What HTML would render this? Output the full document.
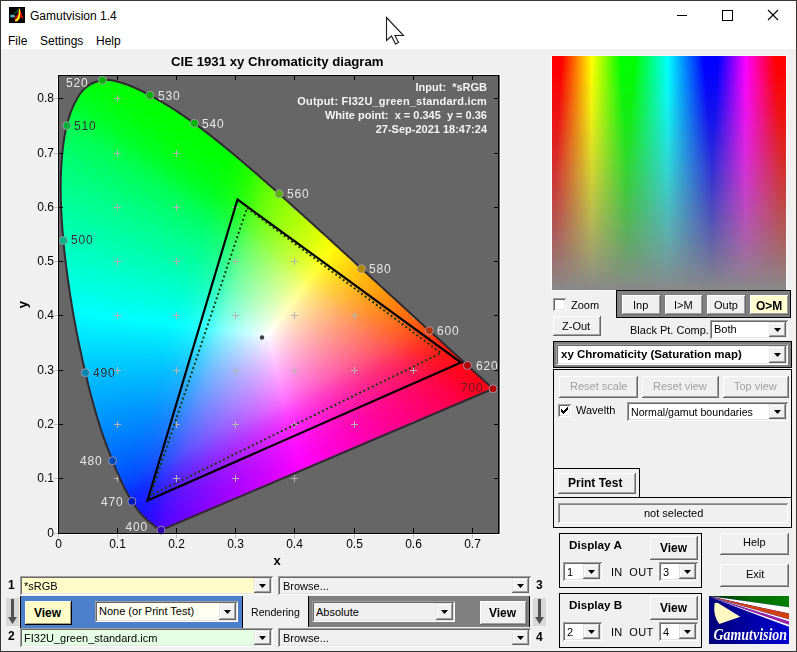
<!DOCTYPE html>
<html><head><meta charset="utf-8">
<style>
*{margin:0;padding:0;box-sizing:border-box}
html,body{width:797px;height:652px;overflow:hidden}
body{position:relative;background:#f0f0f0;font-family:"Liberation Sans",sans-serif;font-size:11px;color:#000}
.a{position:absolute}
.t{position:absolute;white-space:pre;line-height:1}
.b{font-weight:bold}
.btn{position:absolute;background:#f0f0f0;box-shadow:inset -1px -1px #696969,inset 1px 1px #fff,inset -2px -2px #a0a0a0}
.sunk{position:absolute;box-shadow:inset 1px 1px #a0a0a0,inset -1px -1px #fff,inset 2px 2px #696969,inset -2px -2px #e3e3e3}
.arr{position:absolute;background:#f0f0f0;box-shadow:inset -1px -1px #696969,inset 1px 1px #e3e3e3,inset -2px -2px #a0a0a0,inset 2px 2px #fff}
.tri{position:absolute;left:50%;top:50%;margin-left:-4px;margin-top:-2px;width:7px;height:4px}
.box{position:absolute;border:1px solid #000}
.chk{position:absolute;width:13px;height:13px;background:#fff;box-shadow:inset 1px 1px #a0a0a0,inset -1px -1px #fff,inset 2px 2px #696969,inset -2px -2px #e3e3e3}
</style></head><body>

<!-- title + menu bar -->
<div class="a" style="left:0;top:0;width:797px;height:49px;background:#fff"></div>
<svg class="a" style="left:9px;top:7px" width="16" height="16" viewBox="0 0 16 16">
<rect width="16" height="16" fill="#000"/>
<path d="M10 1.5 L11.5 3 L13 8 L14.5 12 L12.5 10.5 L11 11 L9 14 L6.5 15 L6 13.5 L5 12 L6 9.5 L9 7 Z" fill="#b00000"/>
<path d="M11 2.5 L12.5 7 L14.5 12 L12 10 Z" fill="#ff0000"/>
<path d="M10 1.5 L11 2 L11.3 7 L10.5 11.5 L8.5 14 L6.5 14.5 L6 13 L8 11.5 L9.5 8 Z" fill="#ffff00"/>
<path d="M5.5 6 L7.5 5.2 L8.5 3.5 L9.2 1.8" stroke="#00b8c0" stroke-width="1" fill="none" stroke-dasharray="1.2 0.6"/>
<ellipse cx="3.5" cy="9" rx="2.6" ry="1.6" fill="#20c8d8"/>
<ellipse cx="3.8" cy="9" rx="1.4" ry="1" fill="#909090"/>
</svg>
<div class="t" style="left:30px;top:10px;font-size:12px">Gamutvision 1.4</div>
<svg class="a" style="left:670px;top:5px" width="120" height="22">
<path d="M7 10.5 H17" stroke="#000" stroke-width="1"/>
<rect x="52.5" y="5.5" width="10" height="10" fill="none" stroke="#000" stroke-width="1"/>
<path d="M98 5 L108 15 M108 5 L98 15" stroke="#000" stroke-width="1.1"/>
</svg>
<div class="t" style="left:8px;top:35px;font-size:12px">File</div>
<div class="t" style="left:40px;top:35px;font-size:12px">Settings</div>
<div class="t" style="left:96px;top:35px;font-size:12px">Help</div>

<!-- plot -->
<div class="a" style="left:57px;top:74px;width:444px;height:461px;background:#fff"></div>
<div class="a" style="left:58px;top:75px;width:442px;height:459px;background:#666"></div><div class="a" style="left:58px;top:75px;width:442px;height:459px;clip-path:polygon(103.0px 455.2px, 101.9px 455.0px, 97.7px 451.9px, 85.7px 441.7px, 73.9px 426.4px, 65.3px 410.7px, 54.5px 385.8px, 41.1px 348.8px, 27.3px 297.7px, 14.4px 233.8px, 5.3px 165.5px, 2.8px 102.3px, 8.7px 50.5px, 23.5px 17.0px, 44.4px 5.2px, 68.0px 9.3px, 92.0px 20.3px, 136.3px 48.3px, 178.9px 82.0px, 221.2px 118.8px, 263.1px 156.7px, 303.6px 193.6px, 340.7px 227.5px, 371.3px 255.6px, 394.3px 276.5px, 409.5px 290.4px, 425.7px 305.3px, 435.0px 313.8px);background:radial-gradient(circle at 210px 260px,#fff 0,rgba(255,255,255,0.6) 40px,rgba(255,255,255,0) 110px),conic-gradient(from 0deg at 210px 260px,rgb(122,255,0) 0deg,rgb(159,255,0) 10deg,rgb(195,255,0) 20deg,rgb(231,255,0) 30deg,rgb(255,241,0) 40deg,rgb(255,207,0) 50deg,rgb(255,178,0) 60deg,rgb(255,151,0) 70deg,rgb(255,126,0) 80deg,rgb(255,101,62) 90deg,rgb(255,73,94) 100deg,rgb(255,37,119) 110deg,rgb(255,0,143) 120deg,rgb(255,0,165) 130deg,rgb(255,0,188) 140deg,rgb(255,0,212) 150deg,rgb(255,0,238) 160deg,rgb(242,0,255) 170deg,rgb(213,0,255) 180deg,rgb(186,0,255) 190deg,rgb(157,57,255) 200deg,rgb(127,89,255) 210deg,rgb(91,115,255) 220deg,rgb(31,139,255) 230deg,rgb(0,162,255) 240deg,rgb(0,185,255) 250deg,rgb(0,210,255) 260deg,rgb(0,236,255) 270deg,rgb(0,255,244) 280deg,rgb(0,255,216) 290deg,rgb(0,255,190) 300deg,rgb(0,255,164) 310deg,rgb(0,255,138) 320deg,rgb(0,255,109) 330deg,rgb(0,255,76) 340deg,rgb(77,255,16) 350deg,rgb(122,255,0) 360deg)"></div>
<canvas id="cv" class="a" style="left:58px;top:75px" width="442" height="459"></canvas>
<svg class="a" style="left:0;top:0" width="797" height="652">
<defs><clipPath id="lc"><path d="M160.99 530.19 L160.98 530.19 L160.96 530.19 L160.94 530.19 L160.92 530.19 L160.89 530.19 L160.86 530.19 L160.84 530.19 L160.81 530.19 L160.79 530.19 L160.76 530.19 L160.73 530.19 L160.70 530.19 L160.67 530.19 L160.64 530.19 L160.61 530.19 L160.58 530.19 L160.54 530.20 L160.51 530.20 L160.47 530.20 L160.44 530.20 L160.40 530.21 L160.36 530.21 L160.32 530.20 L160.28 530.19 L160.24 530.18 L160.19 530.17 L160.14 530.15 L160.10 530.14 L160.04 530.12 L159.99 530.09 L159.93 530.06 L159.87 530.03 L159.80 530.00 L159.72 529.96 L159.65 529.91 L159.57 529.87 L159.48 529.82 L159.40 529.77 L159.31 529.71 L159.22 529.65 L159.12 529.59 L159.03 529.53 L158.93 529.46 L158.83 529.39 L158.73 529.31 L158.62 529.23 L158.51 529.15 L158.39 529.05 L158.26 528.96 L158.12 528.85 L157.98 528.75 L157.84 528.63 L157.69 528.52 L157.53 528.39 L157.37 528.26 L157.20 528.13 L157.04 527.99 L156.87 527.85 L156.69 527.70 L156.51 527.55 L156.33 527.39 L156.14 527.23 L155.94 527.06 L155.73 526.88 L155.51 526.71 L155.29 526.52 L155.06 526.34 L154.82 526.15 L154.58 525.95 L154.32 525.75 L154.06 525.53 L153.77 525.31 L153.48 525.07 L153.17 524.83 L152.86 524.58 L152.53 524.32 L152.19 524.05 L151.84 523.78 L151.48 523.49 L151.11 523.19 L150.74 522.89 L150.35 522.58 L149.96 522.26 L149.55 521.94 L149.13 521.60 L148.70 521.25 L148.26 520.87 L147.80 520.48 L147.33 520.07 L146.85 519.64 L146.35 519.21 L145.84 518.75 L145.32 518.28 L144.78 517.77 L144.23 517.24 L143.66 516.68 L143.09 516.10 L142.51 515.51 L141.92 514.91 L141.31 514.28 L140.68 513.60 L140.03 512.86 L139.35 512.04 L138.63 511.14 L137.89 510.17 L137.11 509.15 L136.31 508.07 L135.49 506.92 L134.63 505.69 L133.75 504.37 L132.83 502.95 L131.89 501.42 L130.92 499.81 L129.93 498.13 L128.91 496.36 L127.86 494.50 L126.78 492.52 L125.66 490.40 L124.51 488.13 L123.32 485.68 L122.09 483.09 L120.83 480.38 L119.54 477.53 L118.21 474.54 L116.84 471.39 L115.43 468.05 L113.98 464.51 L112.49 460.76 L110.95 456.82 L109.34 452.71 L107.69 448.43 L106.00 443.95 L104.28 439.26 L102.56 434.36 L100.84 429.23 L99.13 423.85 L97.42 418.22 L95.69 412.35 L93.96 406.26 L92.21 399.94 L90.47 393.41 L88.75 386.68 L87.04 379.76 L85.35 372.66 L83.66 365.31 L81.96 357.68 L80.26 349.82 L78.58 341.77 L76.93 333.60 L75.34 325.34 L73.82 317.04 L72.40 308.76 L71.04 300.41 L69.71 291.89 L68.43 283.27 L67.22 274.60 L66.09 265.93 L65.06 257.33 L64.14 248.84 L63.35 240.52 L62.66 232.31 L62.06 224.10 L61.55 215.96 L61.14 207.90 L60.85 199.97 L60.70 192.21 L60.68 184.65 L60.81 177.34 L61.08 170.19 L61.48 163.16 L62.01 156.28 L62.68 149.59 L63.48 143.13 L64.42 136.94 L65.50 131.07 L66.72 125.55 L68.10 120.33 L69.65 115.37 L71.34 110.68 L73.17 106.27 L75.12 102.19 L77.17 98.43 L79.30 95.03 L81.51 92.00 L83.81 89.37 L86.24 87.14 L88.79 85.27 L91.42 83.73 L94.12 82.48 L96.88 81.49 L99.65 80.73 L102.44 80.16 L105.26 79.87 L108.14 79.91 L111.08 80.24 L114.05 80.80 L117.05 81.54 L120.05 82.40 L123.05 83.33 L126.04 84.29 L129.02 85.32 L132.03 86.51 L135.05 87.82 L138.08 89.23 L141.09 90.71 L144.09 92.24 L147.06 93.78 L149.99 95.31 L152.88 96.84 L155.75 98.42 L158.60 100.03 L161.43 101.67 L164.23 103.34 L167.03 105.04 L169.81 106.76 L172.58 108.50 L175.34 110.27 L178.08 112.06 L180.80 113.87 L183.51 115.72 L186.21 117.58 L188.90 119.47 L191.59 121.39 L194.29 123.32 L196.98 125.28 L199.66 127.26 L202.35 129.27 L205.02 131.30 L207.70 133.36 L210.37 135.42 L213.03 137.51 L215.69 139.61 L218.35 141.72 L221.01 143.86 L223.65 146.01 L226.30 148.18 L228.94 150.36 L231.58 152.56 L234.22 154.76 L236.87 156.98 L239.51 159.20 L242.15 161.44 L244.79 163.70 L247.42 165.96 L250.06 168.24 L252.70 170.52 L255.34 172.81 L257.98 175.11 L260.62 177.42 L263.27 179.73 L265.92 182.06 L268.57 184.40 L271.22 186.74 L273.87 189.08 L276.51 191.43 L279.15 193.78 L281.79 196.14 L284.43 198.50 L287.06 200.87 L289.69 203.24 L292.32 205.61 L294.95 207.99 L297.58 210.36 L300.21 212.73 L302.83 215.10 L305.46 217.47 L308.08 219.84 L310.71 222.22 L313.33 224.59 L315.94 226.95 L318.54 229.32 L321.14 231.68 L323.73 234.03 L326.31 236.38 L328.89 238.74 L331.46 241.08 L334.03 243.43 L336.58 245.76 L339.13 248.09 L341.66 250.40 L344.19 252.71 L346.71 255.02 L349.22 257.31 L351.72 259.60 L354.21 261.88 L356.68 264.15 L359.14 266.40 L361.59 268.64 L364.03 270.87 L366.45 273.09 L368.87 275.30 L371.27 277.50 L373.65 279.68 L376.02 281.85 L378.37 284.00 L380.69 286.12 L383.01 288.23 L385.31 290.33 L387.59 292.41 L389.85 294.47 L392.10 296.52 L394.32 298.54 L396.51 300.54 L398.67 302.52 L400.81 304.48 L402.93 306.42 L405.03 308.35 L407.10 310.25 L409.14 312.12 L411.15 313.97 L413.12 315.78 L415.06 317.56 L416.95 319.29 L418.81 320.99 L420.63 322.66 L422.42 324.29 L424.18 325.90 L425.92 327.49 L427.62 329.05 L429.31 330.58 L430.97 332.11 L432.61 333.61 L434.23 335.08 L435.82 336.54 L437.38 337.96 L438.90 339.35 L440.39 340.71 L441.85 342.04 L443.26 343.33 L444.64 344.58 L445.99 345.80 L447.30 346.99 L448.59 348.15 L449.84 349.29 L451.06 350.40 L452.25 351.48 L453.42 352.55 L454.55 353.58 L455.64 354.59 L456.71 355.57 L457.75 356.53 L458.76 357.46 L459.75 358.36 L460.71 359.25 L461.65 360.11 L462.55 360.94 L463.42 361.74 L464.27 362.52 L465.10 363.28 L465.90 364.02 L466.69 364.74 L467.45 365.44 L468.20 366.12 L468.92 366.77 L469.62 367.40 L470.30 368.02 L470.95 368.61 L471.60 369.20 L472.22 369.76 L472.83 370.32 L473.43 370.87 L474.01 371.39 L474.56 371.90 L475.10 372.40 L475.63 372.89 L476.15 373.36 L476.65 373.83 L477.15 374.28 L477.64 374.73 L478.12 375.17 L478.59 375.60 L479.04 376.02 L479.49 376.43 L479.92 376.83 L480.34 377.22 L480.76 377.60 L481.16 377.97 L481.56 378.33 L481.94 378.68 L482.32 379.03 L482.68 379.36 L483.03 379.69 L483.38 380.00 L483.72 380.31 L484.04 380.61 L484.36 380.89 L484.67 381.17 L484.97 381.44 L485.26 381.70 L485.55 381.95 L485.82 382.19 L486.08 382.43 L486.33 382.65 L486.55 382.86 L486.76 383.05 L486.97 383.24 L487.17 383.43 L487.39 383.62 L487.61 383.83 L487.86 384.06 L488.13 384.31 L488.43 384.59 L488.75 384.88 L489.08 385.18 L489.40 385.47 L489.70 385.75 L489.98 386.00 L490.22 386.23 L490.43 386.42 L490.61 386.58 L490.77 386.73 L490.91 386.86 L491.04 386.98 L491.16 387.09 L491.28 387.20 L491.40 387.31 L491.53 387.42 L491.64 387.53 L491.74 387.62 L491.84 387.72 L491.94 387.81 L492.04 387.89 L492.13 387.98 L492.23 388.07 L492.34 388.17 L492.45 388.27 L492.56 388.37 L492.67 388.47 L492.77 388.57 L492.86 388.65 L492.94 388.73 L493.00 388.78 Z"/></clipPath></defs>
<path d="M114 478.5h7M117.5 475v7M114 424.5h7M117.5 421v7M114 370.5h7M117.5 367v7M114 315.5h7M117.5 312v7M114 261.5h7M117.5 258v7M114 207.5h7M117.5 204v7M114 153.5h7M117.5 150v7M114 98.5h7M117.5 95v7M173 478.5h7M176.5 475v7M173 424.5h7M176.5 421v7M173 370.5h7M176.5 367v7M173 315.5h7M176.5 312v7M173 261.5h7M176.5 258v7M173 207.5h7M176.5 204v7M173 153.5h7M176.5 150v7M173 98.5h7M176.5 95v7M232 478.5h7M235.5 475v7M232 424.5h7M235.5 421v7M232 370.5h7M235.5 367v7M232 315.5h7M235.5 312v7M232 261.5h7M235.5 258v7M232 207.5h7M235.5 204v7M232 153.5h7M235.5 150v7M232 98.5h7M235.5 95v7M291 478.5h7M294.5 475v7M291 424.5h7M294.5 421v7M291 370.5h7M294.5 367v7M291 315.5h7M294.5 312v7M291 261.5h7M294.5 258v7M291 207.5h7M294.5 204v7M291 153.5h7M294.5 150v7M291 98.5h7M294.5 95v7M351 478.5h7M354.5 475v7M351 424.5h7M354.5 421v7M351 370.5h7M354.5 367v7M351 315.5h7M354.5 312v7M351 261.5h7M354.5 258v7M351 207.5h7M354.5 204v7M351 153.5h7M354.5 150v7M351 98.5h7M354.5 95v7M410 478.5h7M413.5 475v7M410 424.5h7M413.5 421v7M410 370.5h7M413.5 367v7M410 315.5h7M413.5 312v7M410 261.5h7M413.5 258v7M410 207.5h7M413.5 204v7M410 153.5h7M413.5 150v7M410 98.5h7M413.5 95v7M469 478.5h7M472.5 475v7M469 424.5h7M472.5 421v7M469 315.5h7M472.5 312v7M469 261.5h7M472.5 258v7M469 207.5h7M472.5 204v7M469 153.5h7M472.5 150v7M469 98.5h7M472.5 95v7" stroke="#b4b4b4" stroke-width="1" fill="none" clip-path="url(#lc)" shape-rendering="crispEdges"/>
<path d="M114 478.5h7M117.5 475v7M291 478.5h7M294.5 475v7" stroke="#b4b4b4" stroke-width="1" fill="none" shape-rendering="crispEdges"/>
<path d="M160.99 530.19 L160.98 530.19 L160.96 530.19 L160.94 530.19 L160.92 530.19 L160.89 530.19 L160.86 530.19 L160.84 530.19 L160.81 530.19 L160.79 530.19 L160.76 530.19 L160.73 530.19 L160.70 530.19 L160.67 530.19 L160.64 530.19 L160.61 530.19 L160.58 530.19 L160.54 530.20 L160.51 530.20 L160.47 530.20 L160.44 530.20 L160.40 530.21 L160.36 530.21 L160.32 530.20 L160.28 530.19 L160.24 530.18 L160.19 530.17 L160.14 530.15 L160.10 530.14 L160.04 530.12 L159.99 530.09 L159.93 530.06 L159.87 530.03 L159.80 530.00 L159.72 529.96 L159.65 529.91 L159.57 529.87 L159.48 529.82 L159.40 529.77 L159.31 529.71 L159.22 529.65 L159.12 529.59 L159.03 529.53 L158.93 529.46 L158.83 529.39 L158.73 529.31 L158.62 529.23 L158.51 529.15 L158.39 529.05 L158.26 528.96 L158.12 528.85 L157.98 528.75 L157.84 528.63 L157.69 528.52 L157.53 528.39 L157.37 528.26 L157.20 528.13 L157.04 527.99 L156.87 527.85 L156.69 527.70 L156.51 527.55 L156.33 527.39 L156.14 527.23 L155.94 527.06 L155.73 526.88 L155.51 526.71 L155.29 526.52 L155.06 526.34 L154.82 526.15 L154.58 525.95 L154.32 525.75 L154.06 525.53 L153.77 525.31 L153.48 525.07 L153.17 524.83 L152.86 524.58 L152.53 524.32 L152.19 524.05 L151.84 523.78 L151.48 523.49 L151.11 523.19 L150.74 522.89 L150.35 522.58 L149.96 522.26 L149.55 521.94 L149.13 521.60 L148.70 521.25 L148.26 520.87 L147.80 520.48 L147.33 520.07 L146.85 519.64 L146.35 519.21 L145.84 518.75 L145.32 518.28 L144.78 517.77 L144.23 517.24 L143.66 516.68 L143.09 516.10 L142.51 515.51 L141.92 514.91 L141.31 514.28 L140.68 513.60 L140.03 512.86 L139.35 512.04 L138.63 511.14 L137.89 510.17 L137.11 509.15 L136.31 508.07 L135.49 506.92 L134.63 505.69 L133.75 504.37 L132.83 502.95 L131.89 501.42 L130.92 499.81 L129.93 498.13 L128.91 496.36 L127.86 494.50 L126.78 492.52 L125.66 490.40 L124.51 488.13 L123.32 485.68 L122.09 483.09 L120.83 480.38 L119.54 477.53 L118.21 474.54 L116.84 471.39 L115.43 468.05 L113.98 464.51 L112.49 460.76 L110.95 456.82 L109.34 452.71 L107.69 448.43 L106.00 443.95 L104.28 439.26 L102.56 434.36 L100.84 429.23 L99.13 423.85 L97.42 418.22 L95.69 412.35 L93.96 406.26 L92.21 399.94 L90.47 393.41 L88.75 386.68 L87.04 379.76 L85.35 372.66 L83.66 365.31 L81.96 357.68 L80.26 349.82 L78.58 341.77 L76.93 333.60 L75.34 325.34 L73.82 317.04 L72.40 308.76 L71.04 300.41 L69.71 291.89 L68.43 283.27 L67.22 274.60 L66.09 265.93 L65.06 257.33 L64.14 248.84 L63.35 240.52 L62.66 232.31 L62.06 224.10 L61.55 215.96 L61.14 207.90 L60.85 199.97 L60.70 192.21 L60.68 184.65 L60.81 177.34 L61.08 170.19 L61.48 163.16 L62.01 156.28 L62.68 149.59 L63.48 143.13 L64.42 136.94 L65.50 131.07 L66.72 125.55 L68.10 120.33 L69.65 115.37 L71.34 110.68 L73.17 106.27 L75.12 102.19 L77.17 98.43 L79.30 95.03 L81.51 92.00 L83.81 89.37 L86.24 87.14 L88.79 85.27 L91.42 83.73 L94.12 82.48 L96.88 81.49 L99.65 80.73 L102.44 80.16 L105.26 79.87 L108.14 79.91 L111.08 80.24 L114.05 80.80 L117.05 81.54 L120.05 82.40 L123.05 83.33 L126.04 84.29 L129.02 85.32 L132.03 86.51 L135.05 87.82 L138.08 89.23 L141.09 90.71 L144.09 92.24 L147.06 93.78 L149.99 95.31 L152.88 96.84 L155.75 98.42 L158.60 100.03 L161.43 101.67 L164.23 103.34 L167.03 105.04 L169.81 106.76 L172.58 108.50 L175.34 110.27 L178.08 112.06 L180.80 113.87 L183.51 115.72 L186.21 117.58 L188.90 119.47 L191.59 121.39 L194.29 123.32 L196.98 125.28 L199.66 127.26 L202.35 129.27 L205.02 131.30 L207.70 133.36 L210.37 135.42 L213.03 137.51 L215.69 139.61 L218.35 141.72 L221.01 143.86 L223.65 146.01 L226.30 148.18 L228.94 150.36 L231.58 152.56 L234.22 154.76 L236.87 156.98 L239.51 159.20 L242.15 161.44 L244.79 163.70 L247.42 165.96 L250.06 168.24 L252.70 170.52 L255.34 172.81 L257.98 175.11 L260.62 177.42 L263.27 179.73 L265.92 182.06 L268.57 184.40 L271.22 186.74 L273.87 189.08 L276.51 191.43 L279.15 193.78 L281.79 196.14 L284.43 198.50 L287.06 200.87 L289.69 203.24 L292.32 205.61 L294.95 207.99 L297.58 210.36 L300.21 212.73 L302.83 215.10 L305.46 217.47 L308.08 219.84 L310.71 222.22 L313.33 224.59 L315.94 226.95 L318.54 229.32 L321.14 231.68 L323.73 234.03 L326.31 236.38 L328.89 238.74 L331.46 241.08 L334.03 243.43 L336.58 245.76 L339.13 248.09 L341.66 250.40 L344.19 252.71 L346.71 255.02 L349.22 257.31 L351.72 259.60 L354.21 261.88 L356.68 264.15 L359.14 266.40 L361.59 268.64 L364.03 270.87 L366.45 273.09 L368.87 275.30 L371.27 277.50 L373.65 279.68 L376.02 281.85 L378.37 284.00 L380.69 286.12 L383.01 288.23 L385.31 290.33 L387.59 292.41 L389.85 294.47 L392.10 296.52 L394.32 298.54 L396.51 300.54 L398.67 302.52 L400.81 304.48 L402.93 306.42 L405.03 308.35 L407.10 310.25 L409.14 312.12 L411.15 313.97 L413.12 315.78 L415.06 317.56 L416.95 319.29 L418.81 320.99 L420.63 322.66 L422.42 324.29 L424.18 325.90 L425.92 327.49 L427.62 329.05 L429.31 330.58 L430.97 332.11 L432.61 333.61 L434.23 335.08 L435.82 336.54 L437.38 337.96 L438.90 339.35 L440.39 340.71 L441.85 342.04 L443.26 343.33 L444.64 344.58 L445.99 345.80 L447.30 346.99 L448.59 348.15 L449.84 349.29 L451.06 350.40 L452.25 351.48 L453.42 352.55 L454.55 353.58 L455.64 354.59 L456.71 355.57 L457.75 356.53 L458.76 357.46 L459.75 358.36 L460.71 359.25 L461.65 360.11 L462.55 360.94 L463.42 361.74 L464.27 362.52 L465.10 363.28 L465.90 364.02 L466.69 364.74 L467.45 365.44 L468.20 366.12 L468.92 366.77 L469.62 367.40 L470.30 368.02 L470.95 368.61 L471.60 369.20 L472.22 369.76 L472.83 370.32 L473.43 370.87 L474.01 371.39 L474.56 371.90 L475.10 372.40 L475.63 372.89 L476.15 373.36 L476.65 373.83 L477.15 374.28 L477.64 374.73 L478.12 375.17 L478.59 375.60 L479.04 376.02 L479.49 376.43 L479.92 376.83 L480.34 377.22 L480.76 377.60 L481.16 377.97 L481.56 378.33 L481.94 378.68 L482.32 379.03 L482.68 379.36 L483.03 379.69 L483.38 380.00 L483.72 380.31 L484.04 380.61 L484.36 380.89 L484.67 381.17 L484.97 381.44 L485.26 381.70 L485.55 381.95 L485.82 382.19 L486.08 382.43 L486.33 382.65 L486.55 382.86 L486.76 383.05 L486.97 383.24 L487.17 383.43 L487.39 383.62 L487.61 383.83 L487.86 384.06 L488.13 384.31 L488.43 384.59 L488.75 384.88 L489.08 385.18 L489.40 385.47 L489.70 385.75 L489.98 386.00 L490.22 386.23 L490.43 386.42 L490.61 386.58 L490.77 386.73 L490.91 386.86 L491.04 386.98 L491.16 387.09 L491.28 387.20 L491.40 387.31 L491.53 387.42 L491.64 387.53 L491.74 387.62 L491.84 387.72 L491.94 387.81 L492.04 387.89 L492.13 387.98 L492.23 388.07 L492.34 388.17 L492.45 388.27 L492.56 388.37 L492.67 388.47 L492.77 388.57 L492.86 388.65 L492.94 388.73 L493.00 388.78 Z" stroke="#302a30" stroke-width="2" fill="none" stroke-linejoin="round"/>
<path d="M237.5 199.5L461 362.5L147.5 500.5Z" stroke="#000" stroke-width="2.2" fill="none" stroke-linejoin="miter"/>
<path d="M247 208L441 353L150.5 495.5Z" stroke="#1e3a12" stroke-width="2" fill="none" stroke-dasharray="2 2.6"/>
<circle cx="262" cy="337.5" r="2.2" fill="#404040"/>
<circle cx="160.99" cy="530.19" r="4" fill="rgb(53,0,178)" stroke="rgba(170,155,180,0.85)" stroke-width="1"/><circle cx="131.89" cy="501.42" r="4" fill="rgb(0,24,178)" stroke="rgba(170,155,180,0.85)" stroke-width="1"/><circle cx="112.49" cy="460.76" r="4" fill="rgb(0,73,178)" stroke="rgba(170,155,180,0.85)" stroke-width="1"/><circle cx="85.35" cy="372.66" r="4" fill="rgb(0,135,178)" stroke="rgba(170,155,180,0.85)" stroke-width="1"/><circle cx="63.35" cy="240.52" r="4" fill="rgb(0,178,130)" stroke="rgba(170,155,180,0.85)" stroke-width="1"/><circle cx="66.72" cy="125.55" r="4" fill="rgb(0,178,57)" stroke="rgba(170,155,180,0.85)" stroke-width="1"/><circle cx="102.44" cy="80.16" r="4" fill="rgb(0,178,0)" stroke="rgba(170,155,180,0.85)" stroke-width="1"/><circle cx="149.99" cy="95.31" r="4" fill="rgb(0,178,0)" stroke="rgba(170,155,180,0.85)" stroke-width="1"/><circle cx="194.29" cy="123.32" r="4" fill="rgb(0,178,0)" stroke="rgba(170,155,180,0.85)" stroke-width="1"/><circle cx="279.15" cy="193.78" r="4" fill="rgb(87,178,0)" stroke="rgba(170,155,180,0.85)" stroke-width="1"/><circle cx="361.59" cy="268.64" r="4" fill="rgb(178,136,0)" stroke="rgba(170,155,180,0.85)" stroke-width="1"/><circle cx="429.31" cy="330.58" r="4" fill="rgb(178,50,0)" stroke="rgba(170,155,180,0.85)" stroke-width="1"/><circle cx="467.45" cy="365.44" r="4" fill="rgb(178,0,0)" stroke="rgba(170,155,180,0.85)" stroke-width="1"/><circle cx="493.00" cy="388.78" r="4" fill="rgb(178,0,0)" stroke="rgba(170,155,180,0.85)" stroke-width="1"/>
<g shape-rendering="crispEdges">
<rect x="58.5" y="75.5" width="440" height="458" fill="none" stroke="#000" stroke-width="1"/>
<rect x="497.5" y="75.5" width="1" height="458" fill="#000"/>
<path d="M58.5 533V528M58.5 76V80M117.5 533V528M117.5 76V80M176.5 533V528M176.5 76V80M235.5 533V528M235.5 76V80M294.5 533V528M294.5 76V80M354.5 533V528M354.5 76V80M413.5 533V528M413.5 76V80M472.5 533V528M472.5 76V80M59 533.5H63M498 533.5H494M59 478.5H63M498 478.5H494M59 424.5H63M498 424.5H494M59 370.5H63M498 370.5H494M59 315.5H63M498 315.5H494M59 261.5H63M498 261.5H494M59 207.5H63M498 207.5H494M59 153.5H63M498 153.5H494M59 98.5H63M498 98.5H494" stroke="#000" stroke-width="1" fill="none"/>
<path d="M58.5 534V538M117.5 534V538M176.5 534V538M235.5 534V538M294.5 534V538M354.5 534V538M413.5 534V538M472.5 534V538M54 533.5H58M54 478.5H58M54 424.5H58M54 370.5H58M54 315.5H58M54 261.5H58M54 207.5H58M54 153.5H58M54 98.5H58" stroke="#c8c0b8" stroke-width="1" fill="none"/>
</g></svg>
<div class="t b" style="left:171px;top:55px;font-size:13.2px">CIE 1931 xy Chromaticity diagram</div>
<div class="t" style="left:28.5px;width:60px;text-align:center;top:538px;font-size:12px">0</div>
<div class="t" style="left:87.5px;width:60px;text-align:center;top:538px;font-size:12px">0.1</div>
<div class="t" style="left:146.5px;width:60px;text-align:center;top:538px;font-size:12px">0.2</div>
<div class="t" style="left:205.5px;width:60px;text-align:center;top:538px;font-size:12px">0.3</div>
<div class="t" style="left:264.5px;width:60px;text-align:center;top:538px;font-size:12px">0.4</div>
<div class="t" style="left:324.5px;width:60px;text-align:center;top:538px;font-size:12px">0.5</div>
<div class="t" style="left:383.5px;width:60px;text-align:center;top:538px;font-size:12px">0.6</div>
<div class="t" style="left:442.5px;width:60px;text-align:center;top:538px;font-size:12px">0.7</div>
<div class="t" style="left:0;width:54px;text-align:right;top:527.0px;font-size:12px">0</div>
<div class="t" style="left:0;width:54px;text-align:right;top:472.0px;font-size:12px">0.1</div>
<div class="t" style="left:0;width:54px;text-align:right;top:418.0px;font-size:12px">0.2</div>
<div class="t" style="left:0;width:54px;text-align:right;top:364.0px;font-size:12px">0.3</div>
<div class="t" style="left:0;width:54px;text-align:right;top:309.0px;font-size:12px">0.4</div>
<div class="t" style="left:0;width:54px;text-align:right;top:255.0px;font-size:12px">0.5</div>
<div class="t" style="left:0;width:54px;text-align:right;top:201.0px;font-size:12px">0.6</div>
<div class="t" style="left:0;width:54px;text-align:right;top:147.0px;font-size:12px">0.7</div>
<div class="t" style="left:0;width:54px;text-align:right;top:92.0px;font-size:12px">0.8</div>
<div class="t" style="left:66px;top:77px;font-size:12px;letter-spacing:0.8px;color:#e6e6e6">520</div>
<div class="t" style="left:158px;top:90px;font-size:12px;letter-spacing:0.8px;color:#e6e6e6">530</div>
<div class="t" style="left:202px;top:118px;font-size:12px;letter-spacing:0.8px;color:#e6e6e6">540</div>
<div class="t" style="left:74px;top:120px;font-size:12px;letter-spacing:0.8px;color:#3a2e3a">510</div>
<div class="t" style="left:71px;top:234px;font-size:12px;letter-spacing:0.8px;color:#3a2e3a">500</div>
<div class="t" style="left:93px;top:367px;font-size:12px;letter-spacing:0.8px;color:#3a2e3a">490</div>
<div class="t" style="left:80px;top:455px;font-size:12px;letter-spacing:0.8px;color:#e6e6e6">480</div>
<div class="t" style="left:101px;top:496px;font-size:12px;letter-spacing:0.8px;color:#e6e6e6">470</div>
<div class="t" style="left:125.5px;top:521px;font-size:12px;letter-spacing:0.8px;color:#e6e6e6">400</div>
<div class="t" style="left:287px;top:188px;font-size:12px;letter-spacing:0.8px;color:#e6e6e6">560</div>
<div class="t" style="left:369px;top:263px;font-size:12px;letter-spacing:0.8px;color:#e6e6e6">580</div>
<div class="t" style="left:437px;top:325px;font-size:12px;letter-spacing:0.8px;color:#e6e6e6">600</div>
<div class="t" style="left:476px;top:360px;font-size:12px;letter-spacing:0.8px;color:#e6e6e6">620</div>
<div class="t" style="left:461px;top:382px;font-size:12px;letter-spacing:0.8px;color:#6a1828">700</div>
<div class="t b" style="left:187px;width:300px;text-align:right;top:82px;font-size:11px;color:#f4f4f4;letter-spacing:0px">Input:  *sRGB</div>
<div class="t b" style="left:187px;width:300px;text-align:right;top:96px;font-size:11px;color:#f4f4f4;letter-spacing:0.2px">Output: FI32U_green_standard.icm</div>
<div class="t b" style="left:187px;width:300px;text-align:right;top:110px;font-size:11px;color:#f4f4f4;letter-spacing:0px">White point:  x = 0.345  y = 0.36</div>
<div class="t b" style="left:187px;width:300px;text-align:right;top:124px;font-size:11px;color:#f4f4f4;letter-spacing:0px">27-Sep-2021 18:47:24</div>
<div class="t b" style="left:247px;width:60px;text-align:center;top:554px;font-size:13px">x</div>
<div class="t b" style="left:-8px;width:60px;text-align:center;top:298px;font-size:13px;transform:rotate(-90deg)">y</div>

<!-- hue map -->
<div class="a" style="left:551px;top:55px;width:236px;height:236px;background:#f9f9f9"></div>
<div class="a" style="left:552px;top:56px;width:234px;height:234px;background:linear-gradient(to bottom,rgba(136,136,136,0),#888),linear-gradient(to right,#f00 2%,#ff0 17%,#0f0 32%,#0ff 50%,#00f 68%,#f0f 83%,#f00 98%)"></div>
<canvas id="hm" class="a" style="left:552px;top:56px" width="234" height="234"></canvas>

<!-- right controls -->
<div class="chk" style="left:553px;top:298px"></div>
<div class="t" style="left:571px;top:300px">Zoom</div>
<div class="btn" style="left:553px;top:316px;width:48px;height:20px"></div>
<div class="t" style="left:562px;top:321px">Z-Out</div>

<div class="a" style="left:616px;top:290px;width:175px;height:28px;background:#808080;border:1px solid #000"></div>
<div class="btn" style="left:622px;top:295px;width:39px;height:20px"></div>
<div class="t" style="left:633px;top:300px">Inp</div>
<div class="btn" style="left:665px;top:295px;width:38px;height:20px"></div>
<div class="t" style="left:674px;top:300px">I&gt;M</div>
<div class="btn" style="left:707px;top:295px;width:39px;height:20px"></div>
<div class="t" style="left:714px;top:300px">Outp</div>
<div class="btn" style="left:750px;top:295px;width:39px;height:20px;background:#ffffd0"></div>
<div class="t b" style="left:756px;top:300px;font-size:12px">O&gt;M</div>

<div class="t" style="left:630px;top:325px">Black Pt. Comp.</div>
<div class="sunk" style="left:710px;top:320px;width:78px;height:19px;background:#fff">
 <div class="t" style="left:4px;top:4px">Both</div>
 <div class="arr" style="right:2px;top:2px;width:17px;height:15px"><svg class="tri"><path d="M0 0H7L3.5 4Z"/></svg></div>
</div>

<div class="a" style="left:553px;top:341px;width:239px;height:27px;background:#808080;border:1px solid #000"></div>
<div class="sunk" style="left:556px;top:344px;width:232px;height:21px;background:#fff">
 <div class="t b" style="left:5px;top:5px;font-size:11.5px">xy Chromaticity (Saturation map)</div>
 <div class="arr" style="right:2px;top:2px;width:17px;height:17px"><svg class="tri"><path d="M0 0H7L3.5 4Z"/></svg></div>
</div>

<div class="box" style="left:553px;top:369px;width:239px;height:159px"></div>
<div class="btn" style="left:559px;top:376px;width:79px;height:22px"></div>
<div class="t" style="left:570px;top:381px;color:#a0a0a0">Reset scale</div>
<div class="btn" style="left:642px;top:376px;width:77px;height:22px"></div>
<div class="t" style="left:653px;top:381px;color:#a0a0a0">Reset view</div>
<div class="btn" style="left:723px;top:376px;width:66px;height:22px"></div>
<div class="t" style="left:734px;top:381px;color:#a0a0a0">Top view</div>
<div class="chk" style="left:558px;top:404px"><svg class="a" style="left:3px;top:3px" width="7" height="7" shape-rendering="crispEdges"><path d="M6 0h1v3h-1v1h-1v1h-1v1h-1v1h-1v-1h-1v-1h-1v-3h1v1h1v1h1v-1h1v-1h1z" fill="#000"/></svg></div>
<div class="t" style="left:576px;top:405px">Wavelth</div>
<div class="sunk" style="left:627px;top:402px;width:161px;height:19px;background:#fff">
 <div class="t" style="left:4px;top:5px;font-size:10.6px">Normal/gamut boundaries</div>
 <div class="arr" style="right:2px;top:2px;width:17px;height:15px"><svg class="tri"><path d="M0 0H7L3.5 4Z"/></svg></div>
</div>
<div class="a" style="left:553px;top:468px;width:87px;height:30px;border-top:1px solid #000;border-right:1px solid #000"></div>
<div class="a" style="left:553px;top:497px;width:239px;height:1px;background:#000"></div>
<div class="btn" style="left:558px;top:473px;width:78px;height:21px"></div>
<div class="t b" style="left:568px;top:477px;font-size:12px">Print Test</div>
<div class="a" style="left:558px;top:503px;width:230px;height:20px;background:#f0f0f0;box-shadow:inset 1px 1px #a0a0a0,inset -1px -1px #fff,inset 2px 2px #808080"></div>
<div class="t" style="left:644px;top:508px">not selected</div>

<!-- display A/B -->
<div class="box" style="left:559px;top:533px;width:143px;height:55px"></div>
<div class="t b" style="left:569px;top:539px;font-size:11.7px">Display A</div>
<div class="btn" style="left:650px;top:536px;width:48px;height:24px"></div>
<div class="t b" style="left:660px;top:542px;font-size:12px">View</div>
<div class="sunk" style="left:563px;top:562px;width:39px;height:19px;background:#fff">
 <div class="t" style="left:4px;top:5px">1</div>
 <div class="arr" style="right:2px;top:2px;width:17px;height:15px"><svg class="tri"><path d="M0 0H7L3.5 4Z"/></svg></div>
</div>
<div class="t" style="left:611px;top:567px;letter-spacing:0.3px">IN  OUT</div>
<div class="sunk" style="left:659px;top:562px;width:39px;height:19px;background:#fff">
 <div class="t" style="left:4px;top:5px">3</div>
 <div class="arr" style="right:2px;top:2px;width:17px;height:15px"><svg class="tri"><path d="M0 0H7L3.5 4Z"/></svg></div>
</div>

<div class="box" style="left:559px;top:593px;width:143px;height:55px"></div>
<div class="t b" style="left:569px;top:599px;font-size:11.7px">Display B</div>
<div class="btn" style="left:650px;top:596px;width:48px;height:24px"></div>
<div class="t b" style="left:660px;top:602px;font-size:12px">View</div>
<div class="sunk" style="left:563px;top:622px;width:39px;height:19px;background:#fff">
 <div class="t" style="left:4px;top:5px">2</div>
 <div class="arr" style="right:2px;top:2px;width:17px;height:15px"><svg class="tri"><path d="M0 0H7L3.5 4Z"/></svg></div>
</div>
<div class="t" style="left:611px;top:627px;letter-spacing:0.3px">IN  OUT</div>
<div class="sunk" style="left:659px;top:622px;width:39px;height:19px;background:#fff">
 <div class="t" style="left:4px;top:5px">4</div>
 <div class="arr" style="right:2px;top:2px;width:17px;height:15px"><svg class="tri"><path d="M0 0H7L3.5 4Z"/></svg></div>
</div>

<div class="btn" style="left:720px;top:533px;width:69px;height:22px"></div>
<div class="t" style="left:743px;top:537px">Help</div>
<div class="btn" style="left:720px;top:564px;width:69px;height:23px"></div>
<div class="t" style="left:746px;top:569px">Exit</div>

<!-- logo -->
<svg class="a" style="left:709px;top:596px" width="80" height="48" viewBox="0 0 80 48">
<defs>
<linearGradient id="lb" x1="0" x2="1"><stop offset="0" stop-color="#000078"/><stop offset="1" stop-color="#0000d0"/></linearGradient>
<linearGradient id="lg" x1="0" x2="1"><stop offset="0" stop-color="#002800"/><stop offset="0.5" stop-color="#006800"/><stop offset="1" stop-color="#008000"/></linearGradient>
</defs>
<rect width="80" height="48" fill="url(#lb)"/>
<path d="M0 0 L80 0 L80 11.3 Z" fill="url(#lg)"/>
<path d="M1 0.3 L80 11.3 L80 17.6 Z" fill="#fff"/>
<path d="M1 0.5 L80 17.6 L80 23.4 Z" fill="#d04010"/>
<path d="M1 0.7 L80 23.4 L80 25.5 Z" fill="#fff"/>
<path d="M1 0.9 L80 25.5 L80 28.7 Z" fill="#a020a0"/>
<path d="M1 1.1 L80 28.7 L80 30.8 Z" fill="#fff"/>
<path d="M5.5 7.8 Q6 6 9 7 L31.3 20.7 L10.3 28 Q4 20 5.5 7.8 Z" fill="#fff8c0"/>
<text x="4.5" y="44.3" font-family="Liberation Serif" font-style="italic" font-weight="bold" font-size="16.5" fill="#fff" textLength="73.5" lengthAdjust="spacingAndGlyphs">Gamutvision</text>
</svg>

<!-- profile rows -->
<div class="t b" style="left:8px;top:579px;font-size:12px">1</div>
<div class="sunk" style="left:20px;top:576px;width:253px;height:19px;background:#fffcca">
 <div class="t" style="left:4px;top:5px">*sRGB</div>
 <div class="arr" style="right:2px;top:2px;width:17px;height:15px"><svg class="tri"><path d="M0 0H7L3.5 4Z"/></svg></div>
</div>
<div class="sunk" style="left:278px;top:576px;width:253px;height:19px;background:#f0f0f0">
 <div class="t" style="left:5px;top:5px">Browse...</div>
 <div class="arr" style="right:2px;top:2px;width:17px;height:15px"><svg class="tri"><path d="M0 0H7L3.5 4Z"/></svg></div>
</div>
<div class="t b" style="left:536px;top:579px;font-size:12px">3</div>

<div class="a" style="left:6px;top:598px;width:13px;height:28px;background:#d8d8d8"></div>
<svg class="a" style="left:6px;top:598px" width="13" height="28"><path d="M5 1H8V19H11L6.5 26L2 19H5Z" fill="#505050"/></svg>
<div class="a" style="left:20px;top:596px;width:223px;height:32px;background:#4c7fcc;border-left:1px solid #000;border-right:1px solid #000"></div>
<div class="btn" style="left:25px;top:601px;width:47px;height:24px;background:#fffcc8;box-shadow:inset -1px -1px #000,inset 1px 1px #fffff0,inset -2px -2px #a09f80"></div>
<div class="t b" style="left:34px;top:607px;font-size:12px">View</div>
<div class="a" style="left:95px;top:601px;width:143px;height:21px;background:#fff;box-shadow:inset 1px 1px #fff,inset -1px -1px #fff"></div>
<div class="sunk" style="left:95px;top:601px;width:143px;height:21px;background:#fffff0">
 <div class="t" style="left:4px;top:5px">None (or Print Test)</div>
 <div class="arr" style="right:2px;top:2px;width:17px;height:17px"><svg class="tri"><path d="M0 0H7L3.5 4Z"/></svg></div>
</div>
<div class="t" style="left:251px;top:607px;font-size:10.6px">Rendering</div>
<div class="a" style="left:308px;top:596px;width:222px;height:31px;background:#808080;border-left:1px solid #000;border-right:1px solid #000"></div>
<div class="sunk" style="left:312px;top:601px;width:143px;height:21px;background:#f0f0f0">
 <div class="t" style="left:4px;top:6px">Absolute</div>
 <div class="arr" style="right:2px;top:2px;width:17px;height:17px"><svg class="tri"><path d="M0 0H7L3.5 4Z"/></svg></div>
</div>
<div class="btn" style="left:480px;top:601px;width:47px;height:24px"></div>
<div class="t b" style="left:489px;top:607px;font-size:12px">View</div>
<div class="a" style="left:533px;top:598px;width:13px;height:28px;background:#d8d8d8"></div>
<svg class="a" style="left:533px;top:598px" width="13" height="28"><path d="M5 1H8V19H11L6.5 26L2 19H5Z" fill="#505050"/></svg>

<div class="t b" style="left:8px;top:630px;font-size:12px">2</div>
<div class="sunk" style="left:20px;top:628px;width:253px;height:19px;background:#e5ffe5">
 <div class="t" style="left:4px;top:5px">FI32U_green_standard.icm</div>
 <div class="arr" style="right:2px;top:2px;width:17px;height:15px"><svg class="tri"><path d="M0 0H7L3.5 4Z"/></svg></div>
</div>
<div class="sunk" style="left:278px;top:628px;width:253px;height:19px;background:#f0f0f0">
 <div class="t" style="left:5px;top:5px">Browse...</div>
 <div class="arr" style="right:2px;top:2px;width:17px;height:15px"><svg class="tri"><path d="M0 0H7L3.5 4Z"/></svg></div>
</div>
<div class="t b" style="left:536px;top:631px;font-size:12px">4</div>

<!-- cursor -->
<svg class="a" style="left:380px;top:10px" width="30" height="40"><path d="M6.5 7.5 V30.5 L11.5 26 L15.5 34 L18.5 32.5 L15 25.5 H23.5 Z" fill="#fff" stroke="#1a1a22" stroke-width="1.1" stroke-linejoin="miter"/></svg>

<!-- window border -->
<div class="a" style="left:0;top:0;width:797px;height:652px;border:1px solid #3a3531"></div>

<script>
(function(){
var L=[[380,.1741,.0050],[390,.1738,.0049],[400,.1733,.0048],[405,.1730,.0048],[410,.1726,.0048],[415,.1721,.0048],[420,.1714,.0051],[425,.1703,.0058],[430,.1689,.0069],[435,.1669,.0086],[440,.1644,.0109],[445,.1611,.0138],[450,.1566,.0177],[455,.1510,.0227],[460,.1440,.0297],[465,.1355,.0399],[470,.1241,.0578],[475,.1096,.0868],[480,.0913,.1327],[485,.0687,.2007],[490,.0454,.2950],[495,.0235,.4127],[500,.0082,.5384],[505,.0039,.6548],[510,.0139,.7502],[515,.0389,.8120],[520,.0743,.8338],[525,.1142,.8262],[530,.1547,.8059],[535,.1929,.7816],[540,.2296,.7543],[545,.2658,.7243],[550,.3016,.6923],[555,.3373,.6589],[560,.3731,.6245],[565,.4087,.5896],[570,.4441,.5547],[575,.4788,.5202],[580,.5125,.4866],[585,.5448,.4544],[590,.5752,.4242],[595,.6029,.3965],[600,.6270,.3725],[605,.6482,.3514],[610,.6658,.3340],[615,.6801,.3197],[620,.6915,.3083],[625,.7006,.2993],[630,.7079,.2920],[635,.7140,.2859],[640,.7190,.2809],[645,.7230,.2770],[650,.7260,.2740],[660,.7300,.2700],[670,.7320,.2680],[680,.7334,.2666],[700,.7347,.2653]];
var OX=58,OY=75,SX=591.4,SY=542.86;
function px(x){return 58.5+x*SX-OX;}
function py(y){return 532.8-y*SY-OY;}
var cv=document.getElementById('cv');var c=cv.getContext('2d');
var W=cv.width,H=cv.height;
// smooth locus via Catmull-Rom
var P=[];for(var i=2;i<L.length;i++)P.push([px(L[i][1]),py(L[i][2])]);
var poly=[];
for(var i=0;i<P.length-1;i++){var p0=P[Math.max(i-1,0)],p1=P[i],p2=P[i+1],p3=P[Math.min(i+2,P.length-1)];
 for(var k=0;k<8;k++){var t=k/8,t2=t*t,t3=t2*t;
  poly.push([0.5*((2*p1[0])+(-p0[0]+p2[0])*t+(2*p0[0]-5*p1[0]+4*p2[0]-p3[0])*t2+(-p0[0]+3*p1[0]-3*p2[0]+p3[0])*t3),
             0.5*((2*p1[1])+(-p0[1]+p2[1])*t+(2*p0[1]-5*p1[1]+4*p2[1]-p3[1])*t2+(-p0[1]+3*p1[1]-3*p2[1]+p3[1])*t3)]);}}
poly.push(P[P.length-1]);
c.fillStyle='#666';c.fillRect(0,0,W,H);
var img=c.getImageData(0,0,W,H),d=img.data;
var M=[[3.2406,-1.5372,-0.4986],[-0.9689,1.8758,0.0415],[0.0557,-0.2040,1.0570]];
var WX=0.355,WY=0.365,NB=13,BR=0.3,GM=2.0;
function lin(x,y){var z=1-x-y;return [M[0][0]*x+M[0][1]*y+M[0][2]*z,M[1][0]*x+M[1][1]*y+M[1][2]*z,M[2][0]*x+M[2][1]*y+M[2][2]*z];}
var wr=lin(WX,WY);
function gam(v){return Math.pow(v,1/GM);}
function col(x,y){var r=lin(x,y);r[0]/=wr[0];r[1]/=wr[1];r[2]/=wr[2];for(var k=0;k<3;k++)if(r[k]<0)r[k]=0;var m=Math.max(r[0],r[1],r[2]);if(m<=0)m=1;return [gam(r[0]/m),gam(r[1]/m),gam(r[2]/m)];}
function inside(x,y){var ins=false;for(var i=0,j=poly.length-1;i<poly.length;j=i++){var xi=poly[i][0],yi=poly[i][1],xj=poly[j][0],yj=poly[j][1];if(((yi>y)!=(yj>y))&&(x<(xj-xi)*(y-yi)/(yj-yi)+xi))ins=!ins;}return ins;}
// scanline fill
for(var j=0;j<H;j++){var Y=j+0.5;var xs=[];
 for(var a=0,b=poly.length-1;a<poly.length;b=a++){var ya=poly[a][1],yb=poly[b][1];if((ya>Y)!=(yb>Y)){xs.push(poly[a][0]+(Y-ya)*(poly[b][0]-poly[a][0])/(yb-ya));}}
 xs.sort(function(p,q){return p-q;});
 for(var k=0;k+1<xs.length;k+=2){var i0=Math.max(0,Math.ceil(xs[k]-0.5)),i1=Math.min(W-1,Math.floor(xs[k+1]-0.5));
  for(var i=i0;i<=i1;i++){var x=i/SX,y=(457.3-j)/SY;var cc=[0,0,0];for(var q=0;q<NB;q++){var f=1+BR*(2*q/(NB-1)-1);var c1=col(WX+(x-WX)*f,WY+(y-WY)*f);cc[0]+=c1[0]/NB;cc[1]+=c1[1]/NB;cc[2]+=c1[2]/NB;}var o=(j*W+i)*4;d[o]=Math.round(255*cc[0]);d[o+1]=Math.round(255*cc[1]);d[o+2]=Math.round(255*cc[2]);d[o+3]=255;}}}
c.putImageData(img,0,0);
})();

(function(){
var cv=document.getElementById('hm');var c=cv.getContext('2d');var W=234,H=234;
var img=c.createImageData(W,H),d=img.data;
var hx=[0,3.5,39.6,75,116,160,194,230,234],hv=[0,0,60,120,180,240,300,360,360];
function hue(x){for(var k=0;k<hx.length-1;k++){if(x<=hx[k+1]){return hv[k]+(hv[k+1]-hv[k])*(x-hx[k])/(hx[k+1]-hx[k]);}}return 360;}
function pure(h){h=(h%360+360)%360;var r,g,b,f=(h%60)/60;switch(Math.floor(h/60)){case 0:r=1;g=f;b=0;break;case 1:r=1-f;g=1;b=0;break;case 2:r=0;g=1;b=f;break;case 3:r=0;g=1-f;b=1;break;case 4:r=f;g=0;b=1;break;default:r=1;g=0;b=1-f;}return [r,g,b];}
var G=136;
for(var j=0;j<H;j++){var fy=(j+0.5)/H;var s=1-Math.pow(fy,1.4);
 for(var i=0;i<W;i++){var hh=hue(i+0.5);var wd=11*Math.max(0,1-fy/0.48);var pr=Math.round(hh/120)*120;var dh=hh-pr;if(Math.abs(dh)<60&&wd>0){var ad=Math.max(0,Math.abs(dh)-wd)*60/(60-wd);hh=pr+(dh<0?-ad:ad);}var p=pure(hh);var o=(j*W+i)*4;
  d[o]=Math.round(G+(255*p[0]-G)*s);d[o+1]=Math.round(G+(255*p[1]-G)*s);d[o+2]=Math.round(G+(255*p[2]-G)*s);d[o+3]=255;}}
c.putImageData(img,0,0);
})();

</script>

</body></html>
